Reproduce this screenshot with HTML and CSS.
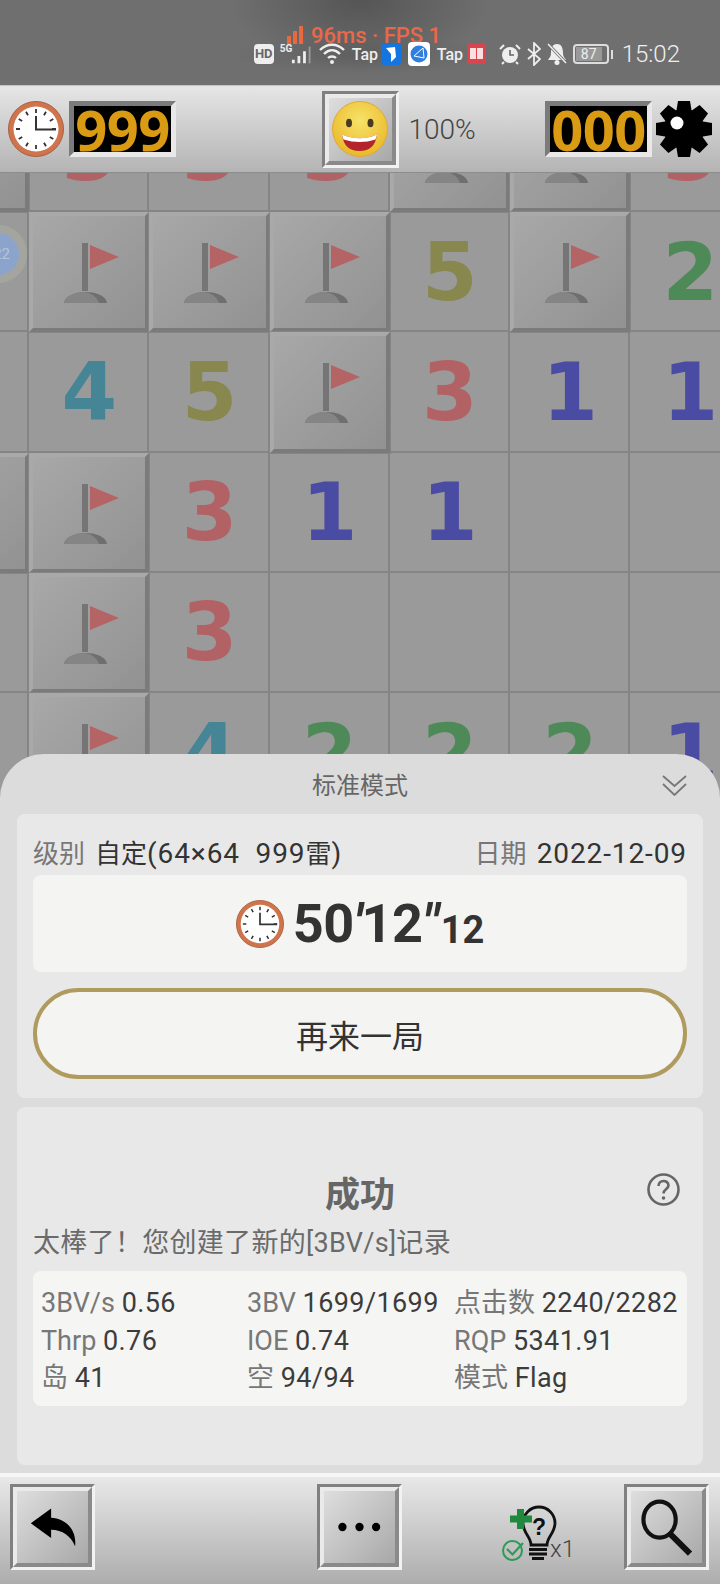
FILE: index.html
```html
<!DOCTYPE html>
<html lang="zh-CN">
<head>
  <meta charset="UTF-8" />
  <title>扫雷 - 标准模式</title>
  <link rel="stylesheet" href="styles.css">
</head>
<body>

  <!-- shared icons -->
  <svg class="defs" width="0" height="0">
    <symbol id="clock" viewBox="0 0 56 56">
      <circle cx="28" cy="28" r="27.5" fill="#cf744c" stroke="#a8603f" stroke-width="1"/>
      <circle cx="28" cy="28" r="22.500" fill="#fff"/>
      <g stroke="#333" stroke-width="1.800">
        <path d="M28 8v4M28 44v4M8 28h4M44 28h4M18 10.700l2 3.500M36 41.800l2 3.500M38 10.700l-2 3.500M20 41.800l-2 3.500M10.700 18l3.500 2M41.800 36l3.500 2M45.300 18l-3.500 2M14.200 36l-3.500 2"/>
      </g>
      <path d="M28 15v13.500h20" fill="none" stroke="#333" stroke-width="2"/>
    </symbol>
    <symbol id="flag" viewBox="0 0 120 120">
      <rect x="53" y="31" width="6" height="48" fill="#757575"/>
      <path d="M61 33L90 45L61 57Z" fill="#b56466"/>
      <path d="M35 91C36 84 46 80 57 80C68 80 77 84 78 91Z" fill="#6f6f6f"/>
      <path d="M35 91C36 84 46 80 54 80C62 80 68 85 70 91Z" fill="#858585"/>
    </symbol>
  </svg>

  <div class="app">

    <header class="status">
      <div class="fps"><svg width="17" height="18" viewBox="0 0 17 18"><path d="M0 10h4v8H0zM6 5h4v13H6zM12 0h4v18h-4z" fill="#e8683f"/></svg><span>96ms · FPS 1</span></div>
      <div class="status-icons">
        <span class="hd">HD</span>
        <span class="net"><small>5G</small><svg width="22" height="20" viewBox="0 0 22 20"><path d="M1 15h3v4H1zM7 11h3v8H7zM13 6h3v13h-3z" fill="#eee"/><path d="M19 1h2v18h-2z" fill="#999"/></svg></span>
        <svg width="28" height="24" viewBox="0 0 28 24" fill="none" stroke="#eee" stroke-width="2.400"><path d="M2 8C9 1 19 1 26 8M6 12C11 7 17 7 22 12M10 16C12 14 16 14 18 16"/><circle cx="14" cy="20" r="2" fill="#eee" stroke="none"/></svg>
        <span class="tap">Tap</span>
        <svg width="20" height="22" viewBox="0 0 20 22"><rect width="20" height="22" rx="3" fill="#1376e0"/><path d="M5 5L14 4L15 14L10 19L10 11Z" fill="#fff"/></svg>
        <svg class="gap-s" width="22" height="24" viewBox="0 0 22 24"><rect width="22" height="24" rx="4" fill="#fff"/><circle cx="11" cy="12" r="8.500" fill="#2f7fe0"/><path d="M6 14L15 6L16 16Z" fill="none" stroke="#fff"/></svg>
        <span class="tap gap-s">Tap</span>
        <svg class="gap-s" width="19" height="20" viewBox="0 0 19 20"><rect width="19" height="20" rx="2" fill="#d9444f"/><path d="M3 4h6v11H3zM10 4h6v11h-6z" fill="#fbe0e0"/></svg>
        <svg class="gap-m" width="22" height="22" viewBox="0 0 22 22"><circle cx="11" cy="12" r="8" fill="#eee"/><path d="M11 7v5h4" fill="none" stroke="#666" stroke-width="1.600"/><path d="M1 6L5 2M21 6L17 2M5 19L3 21M17 19L19 21" stroke="#eee" stroke-width="2"/></svg>
        <svg width="14" height="24" viewBox="0 0 14 24" fill="none" stroke="#eee" stroke-width="1.800"><path d="M1 7L13 17L7 23V1L13 7L1 17"/></svg>
        <svg width="20" height="22" viewBox="0 0 20 22"><path d="M10 1C5 1 4 6 4 10C4 14 2 15 1 17H19C18 15 16 14 16 10C16 6 15 1 10 1Z" fill="#eee"/><circle cx="10" cy="19.500" r="2.500" fill="#eee"/><path d="M2 2L19 20" stroke="#6e6e6e" stroke-width="3"/><path d="M1 1L19 20" stroke="#eee" stroke-width="1.500"/></svg>
        <div class="battery"><div class="battery-box"><span>87</span></div><i></i></div>
        <span class="clock-text">15:02</span>
      </div>
    </header>

    <section class="toolbar">
      <div class="group">
        <svg class="icon56"><use href="#clock"/></svg>
        <div class="digits">999</div>
      </div>
      <div class="bevel smile-btn">
        <div class="bevel-in">
          <svg class="icon56" viewBox="0 0 56 56">
            <defs><radialGradient id="face" cx="50%" cy="35%" r="65%"><stop offset="0" stop-color="#f8e26a"/><stop offset="1" stop-color="#e9b92a"/></radialGradient></defs>
            <circle cx="28" cy="28" r="27.500" fill="url(#face)" stroke="#dfa83a"/>
            <ellipse cx="17" cy="22" rx="3" ry="4.300" fill="#4a3a20"/>
            <ellipse cx="38.500" cy="22" rx="3" ry="4.300" fill="#4a3a20"/>
            <path d="M10 33.500Q28 41 45 33.500Q43 50 27.500 50Q12 50 10 33.500Z" fill="#b3242b"/>
            <path d="M10 33.500Q28 41 45 33.500Q44.500 36 43.500 38.500Q28 43.500 11.500 38.500Q10.500 36 10 33.500Z" fill="#fff"/>
          </svg>
        </div>
      </div>
      <div class="group group-right">
        <span class="percent">100%</span>
        <div class="digits digits-mines">000</div>
        <svg class="gear" width="56" height="56" viewBox="0 0 56 56">
          <circle cx="28" cy="28" r="20"/>
          <path id="tooth" d="M22 0H34L36 12H20Z"/>
          <use href="#tooth" transform="rotate(45 28 28)"/>
          <use href="#tooth" transform="rotate(90 28 28)"/>
          <use href="#tooth" transform="rotate(135 28 28)"/>
          <use href="#tooth" transform="rotate(180 28 28)"/>
          <use href="#tooth" transform="rotate(225 28 28)"/>
          <use href="#tooth" transform="rotate(270 28 28)"/>
          <use href="#tooth" transform="rotate(315 28 28)"/>
          <circle cx="21" cy="22" r="6.500" fill="#fff"/>
        </svg>
      </div>
    </section>

    <main class="board-wrap">
      <div class="board">
        <div class="cell raised"></div>
        <div class="cell n3">3</div>
        <div class="cell n3">3</div>
        <div class="cell n3">3</div>
        <div class="cell raised"><svg><use href="#flag"/></svg></div>
        <div class="cell raised"><svg><use href="#flag"/></svg></div>
        <div class="cell n3">3</div>

        <div class="cell"></div>
        <div class="cell raised"><svg><use href="#flag"/></svg></div>
        <div class="cell raised"><svg><use href="#flag"/></svg></div>
        <div class="cell raised"><svg><use href="#flag"/></svg></div>
        <div class="cell n5">5</div>
        <div class="cell raised"><svg><use href="#flag"/></svg></div>
        <div class="cell n2">2</div>

        <div class="cell"></div>
        <div class="cell n4">4</div>
        <div class="cell n5">5</div>
        <div class="cell raised"><svg><use href="#flag"/></svg></div>
        <div class="cell n3">3</div>
        <div class="cell n1">1</div>
        <div class="cell n1">1</div>

        <div class="cell raised"></div>
        <div class="cell raised"><svg><use href="#flag"/></svg></div>
        <div class="cell n3">3</div>
        <div class="cell n1">1</div>
        <div class="cell n1">1</div>
        <div class="cell"></div>
        <div class="cell"></div>

        <div class="cell"></div>
        <div class="cell raised"><svg><use href="#flag"/></svg></div>
        <div class="cell n3">3</div>
        <div class="cell"></div>
        <div class="cell"></div>
        <div class="cell"></div>
        <div class="cell"></div>

        <div class="cell"></div>
        <div class="cell raised"><svg><use href="#flag"/></svg></div>
        <div class="cell n4">4</div>
        <div class="cell n2">2</div>
        <div class="cell n2">2</div>
        <div class="cell n2">2</div>
        <div class="cell n1">1</div>
      </div>

      <div class="ball"><span>22</span></div>

      <div class="sheet">
        <div class="sheet-head">
          <span>标准模式</span>
          <svg class="chevrons" width="25" height="22" viewBox="0 0 25 22" fill="none" stroke="#777" stroke-width="1.800"><path d="M1 2L12.500 12L24 2M1 10L12.500 21L24 10"/></svg>
        </div>

        <div class="card">
          <div class="info">
            <span><em>级别</em><b>自定</b>(64×64&nbsp;&nbsp;999<b>雷</b>)</span>
            <span><em>日期</em>2022-12-09</span>
          </div>
          <div class="time">
            <svg class="time-clock"><use href="#clock"/></svg>
            <span class="time-big">50<i>′</i>12<i>″</i></span><span class="time-small">12</span>
          </div>
          <button class="again">再来一局</button>
        </div>

        <div class="card card-result">
          <div class="result-title">
            <h3>成功</h3>
            <svg class="help" width="33" height="33" viewBox="0 0 33 33" fill="none" stroke="#666" stroke-width="2.600"><circle cx="16.500" cy="16.500" r="15"/><path d="M11.500 13C11.500 6.500 21.500 6.500 21.500 12.500C21.500 16 16.500 16 16.500 20.500"/><circle cx="16.500" cy="25" r="1.800" fill="#666" stroke="none"/></svg>
          </div>
          <p class="result-msg">太棒了！您创建了新的[3BV/s]记录</p>
          <div class="stats">
            <div><em>3BV/s</em> <span>0.56</span></div>
            <div><em>3BV</em> <span>1699/1699</span></div>
            <div><em>点击数</em> <span>2240/2282</span></div>
            <div><em>Thrp</em> <span>0.76</span></div>
            <div><em>IOE</em> <span>0.74</span></div>
            <div><em>RQP</em> <span>5341.91</span></div>
            <div><em>岛</em> <span>41</span></div>
            <div><em>空</em> <span>94/94</span></div>
            <div><em>模式</em> <span>Flag</span></div>
          </div>
        </div>
      </div>
    </main>

    <footer class="bottom">
      <div class="bevel">
        <div class="bevel-in">
          <svg width="77" height="78" viewBox="0 0 77 78"><path d="M15 35L37 19V29C54 30 65 43 63 60C59 49 49 42 37 42V51Z"/></svg>
        </div>
      </div>
      <div class="bevel btn-more">
        <div class="bevel-in">
          <svg width="77" height="78" viewBox="0 0 77 78"><circle cx="20" cy="39" r="4.500"/><circle cx="38.500" cy="39" r="4.500"/><circle cx="56.500" cy="39" r="4.500"/></svg>
        </div>
      </div>
      <div class="hint">
        <svg width="56" height="60" viewBox="0 0 56 60">
          <path d="M29 43C29 35 21 31 21 21A16 16 0 0 1 53 21C53 31 45 35 45 43Z" fill="none" stroke="#111" stroke-width="2.800"/>
          <path d="M27 47.500h18M27 52h18M30 56.500h12" stroke="#111" stroke-width="3"/>
          <text x="37" y="33" class="hint-q">?</text>
          <path d="M15 7h7v6.500h8v7h-8V27h-7v-6.500H8v-7h7z" fill="#1f8a3d"/>
          <circle cx="10.500" cy="48.500" r="9.500" fill="none" stroke="#2d9a55" stroke-width="2"/>
          <path d="M5 47L10.500 52.500L21 41" fill="none" stroke="#2d9a55" stroke-width="2.200"/>
        </svg>
        <span>x1</span>
      </div>
      <div class="bevel btn-search">
        <div class="bevel-in">
          <svg width="77" height="78" viewBox="0 0 77 78"><ellipse cx="31" cy="31" rx="17.500" ry="19.500" fill="none" stroke="#111" stroke-width="4.500"/><path d="M43 47L64 68" stroke="#111" stroke-width="6.500"/></svg>
        </div>
      </div>
    </footer>

  </div>
</body>
</html>
```

FILE: styles.css
```css
* {
  box-sizing: border-box;
}

body {
  margin: 0;
  font-family: Roboto, "Noto Sans CJK SC", sans-serif;
  background: #9a9a9a;
  color: #333;
}

em {
  font-style: normal;
  color: #777;
}

.defs {
  position: absolute;
}

.app {
  width: 720px;
  height: 1584px;
  display: flex;
  flex-direction: column;
  overflow: hidden;
}

/* status bar */
.status {
  position: relative;
  height: 85px;
  flex: none;
  padding: 42px 40px 0 0;
  background:
    radial-gradient(ellipse 130px 70px at 360px 0, #555, rgba(110,110,110,0)),
    radial-gradient(ellipse 130px 20px at 360px 55px, #626262, rgba(110,110,110,0)),
    #6f6f6f;
}

.fps {
  position: absolute;
  left: 287px;
  top: 26px;
  display: flex;
  align-items: flex-end;
  gap: 7px;
  font-size: 22px;
  font-weight: 500;
  line-height: 16px;
  color: #e8694a;
}

.status-icons {
  position: relative;
  display: flex;
  justify-content: flex-end;
  align-items: center;
  gap: 6px;
  height: 24px;
  color: #eee;
}

.hd {
  width: 20px;
  height: 20px;
  border-radius: 4px;
  background: #eee;
  color: #666;
  font-size: 13px;
  font-weight: 700;
  line-height: 20px;
  text-align: center;
}

.net {
  display: flex;
  align-items: flex-start;
  width: 32px;
}

.net small {
  font-size: 10px;
  font-weight: 700;
  line-height: 12px;
}

.net svg {
  margin-left: -1px;
  margin-top: 2px;
}

.tap {
  font-size: 16px;
  font-weight: 500;
  width: 23px;
}

.gap-s {
  margin-left: 1px;
}

.gap-m {
  margin-left: 7px;
}

.battery {
  display: flex;
  align-items: center;
  gap: 2px;
}

.battery-box {
  width: 36px;
  height: 20px;
  border: 2px solid #ddd;
  border-radius: 4px;
  padding: 1px;
}

.battery-box span {
  display: block;
  width: 26px;
  height: 14px;
  background: #999;
  color: #eee;
  font-size: 14px;
  line-height: 14px;
  text-align: center;
}

.battery i {
  width: 2px;
  height: 9px;
  background: #ddd;
}

.clock-text {
  margin-left: 3px;
  font-size: 24px;
  font-weight: 300;
  color: #f0f0f0;
}

/* top toolbar */
.toolbar {
  position: relative;
  z-index: 2;
  height: 88px;
  flex: none;
  display: grid;
  grid-template-columns: 1fr 77px 1fr;
  align-items: center;
  padding: 0 8px;
  background: linear-gradient(#e6e6e6, #b4b4b4);
  border-top: 1px solid #c4c4c4;
  border-bottom: 1px solid #8c8c8c;
}

.group {
  display: flex;
  align-items: center;
  gap: 5px;
}

.group-right {
  gap: 0;
}

.icon56 {
  display: block;
  width: 56px;
  height: 56px;
  flex: none;
}

.digits {
  width: 107px;
  height: 56px;
  border: 5px solid;
  border-color: #7b7b7b #e8e8e8 #e8e8e8 #7b7b7b;
  background: #000;
  color: #d99a14;
  font-family: "Open Sans", sans-serif;
  font-size: 56px;
  font-weight: 700;
  line-height: 46px;
  letter-spacing: -0.5px;
  text-align: center;
}

.digits-mines {
  margin-left: auto;
}

.percent {
  margin-left: 10px;
  font-size: 28px;
  font-weight: 300;
  color: #444;
}

.gear {
  margin-left: 4px;
  flex: none;
}

/* bevelled buttons */
.bevel {
  width: 85px;
  height: 86px;
  flex: none;
  border: 3px solid;
  border-color: #808080 #f2f2f2 #f2f2f2 #808080;
}

.bevel-in {
  width: 100%;
  height: 100%;
  border: 4px solid;
  border-color: #eaeaea #8a8a8a #8a8a8a #eaeaea;
  background: linear-gradient(135deg, #dedede, #a8a8a8);
  display: flex;
  align-items: center;
  justify-content: center;
}

.smile-btn {
  width: 77px;
  height: 77px;
}

/* board */
.board-wrap {
  position: relative;
  flex: 1;
  overflow: hidden;
}

.board {
  display: grid;
  grid-template-columns: repeat(7, 120.2px);
  grid-auto-rows: 120.2px;
  margin: -81px 0 0 -91px;
  background: #9a9a9a;
}

.cell {
  border-right: 2px solid #858585;
  border-bottom: 2px solid #858585;
  display: flex;
  align-items: center;
  justify-content: center;
  padding: 3px 0 0 2px;
  font-family: "DejaVu Sans", sans-serif;
  font-size: 80px;
  font-weight: 700;
  line-height: 1;
}

.cell.raised {
  padding: 0;
  border: 4px solid;
  border-color: #a9a9a9 #7b7b7b #7b7b7b #a9a9a9;
  background: linear-gradient(135deg, #a8a8a8, #929292);
  outline: 1px solid #858585;
}

.cell svg {
  width: 120px;
  height: 120px;
  flex: none;
}

.n1 { color: #4a4ba3; }
.n2 { color: #4e8a58; }
.n3 { color: #b26165; }
.n4 { color: #458596; }
.n5 { color: #87874e; }

.ball {
  position: absolute;
  left: -31px;
  top: 52px;
  width: 58px;
  height: 58px;
  border-radius: 50%;
  border: 8px solid #a5a5a0;
  background: #8ca4cc;
  color: #b4c4dc;
  font-size: 15px;
  line-height: 42px;
  text-align: right;
  padding-right: 9px;
}

/* result sheet */
.sheet {
  position: absolute;
  left: 0;
  right: 0;
  bottom: 0;
  top: 581px;
  padding: 0 17px;
  border-radius: 44px 44px 0 0;
  background: #dcdcdc;
}

.sheet-head {
  position: relative;
  height: 60px;
  display: flex;
  align-items: center;
  justify-content: center;
  padding-bottom: 2px;
  font-size: 24px;
  color: #666;
}

.chevrons {
  position: absolute;
  right: 16px;
  top: 20px;
}

.card {
  padding: 0 16px 19px;
  border-radius: 8px;
  background: #e8e8e8;
}

.card-result {
  margin-top: 9px;
  height: 358px;
  padding-top: 59px;
}

.info {
  height: 61px;
  padding-top: 21px;
  display: flex;
  justify-content: space-between;
  font-size: 28px;
  line-height: 38px;
  letter-spacing: 0.9px;
  white-space: nowrap;
}

.info em,
.info b {
  font-size: 26px;
  font-weight: 400;
  letter-spacing: 0;
}

.info em {
  margin-right: 10px;
}

.time {
  height: 97px;
  display: flex;
  align-items: center;
  justify-content: center;
  border-radius: 8px;
  background: #f4f4f3;
}

.time-clock {
  width: 48px;
  height: 50px;
  margin-right: 9px;
}

.time-big {
  font-size: 54px;
  font-weight: 700;
  letter-spacing: -0.5px;
}

.time-small {
  font-size: 38px;
  font-weight: 700;
  padding-top: 13px;
  margin-left: 2px;
}

.again {
  display: block;
  width: 100%;
  height: 91px;
  margin-top: 16px;
  border: 4px solid #b09b5e;
  border-radius: 46px;
  background: #f4f4f3;
  color: #333;
  font-family: inherit;
  font-size: 32px;
}

.result-title {
  position: relative;
  height: 50px;
  display: flex;
  align-items: center;
  justify-content: center;
}

.result-title h3 {
  margin: 0;
  font-size: 35px;
  font-weight: 700;
  color: #666;
}

.help {
  position: absolute;
  right: 7px;
  top: 7px;
}

.result-msg {
  margin: 9px 0 10px;
  font-size: 27px;
  line-height: 36px;
  letter-spacing: 0.3px;
  color: #6a6a6a;
  white-space: nowrap;
}

.stats {
  height: 135px;
  padding: 14px 8px 0;
  display: grid;
  grid-template-columns: 206px 207px 1fr;
  grid-auto-rows: 37.5px;
  border-radius: 8px;
  background: #f5f5f4;
  font-size: 27px;
  line-height: 37.5px;
  white-space: nowrap;
}

.stats span {
  letter-spacing: 0.4px;
  color: #3c3c3c;
}

/* bottom toolbar */
.bottom {
  height: 111px;
  flex: none;
  position: relative;
  z-index: 2;
  display: flex;
  align-items: flex-start;
  padding: 7px 11px 0 10px;
  border-top: 4px solid #f6f6f6;
  background: linear-gradient(#e8e8e8, #adadad);
}

.btn-more {
  margin-left: 222px;
}

.hint {
  margin: 18px 0 0 100px;
  display: flex;
  align-items: flex-end;
}

.hint svg {
  flex: none;
  overflow: visible;
}

.hint-q {
  font-family: "Liberation Sans", sans-serif;
  font-size: 23px;
  font-weight: 700;
  text-anchor: middle;
  fill: #111;
}

.hint span {
  margin-left: -8px;
  font-size: 24px;
  font-weight: 300;
  line-height: 26px;
  color: #444;
}

.btn-search {
  margin-left: auto;
}
```
